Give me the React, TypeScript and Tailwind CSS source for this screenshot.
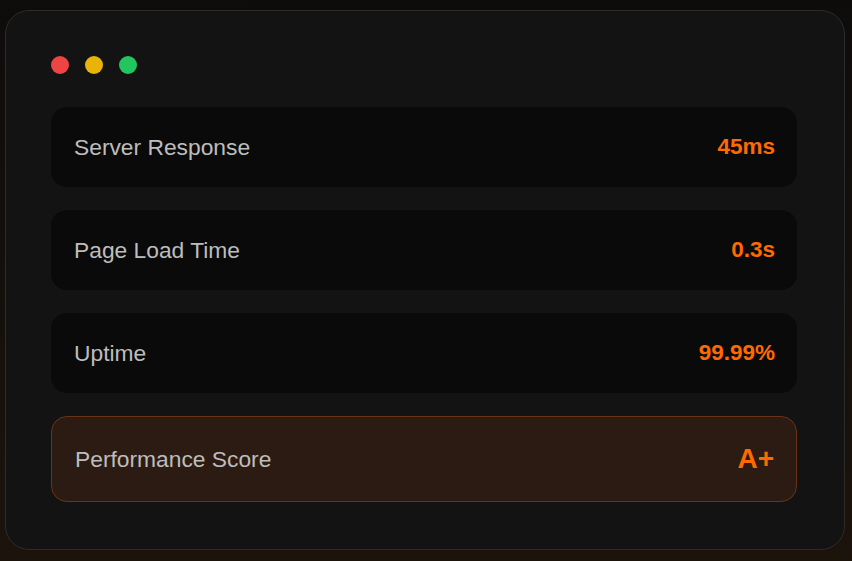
import React from "react";

interface Metric {
  label: string;
  value: string;
}

const metrics: Metric[] = [
  { label: "Server Response", value: "45ms" },
  { label: "Page Load Time", value: "0.3s" },
  { label: "Uptime", value: "99.99%" },
];

const font = { fontFamily: '"Liberation Sans", Arial, sans-serif' };

const MetricRow = ({ label, value }: Metric) => {
  return (
    <div className="flex h-[80px] items-center justify-between rounded-2xl bg-[#0a0a0a] pl-[23px] pr-[22px]">
      <span className="text-[22.8px] text-[#bdbdbd]">{label}</span>
      <span className="text-[22.5px] font-bold text-[#ff6a00]">{value}</span>
    </div>
  );
};

const App = () => {
  return (
    <div
      className="h-[561px] w-full overflow-hidden bg-gradient-to-b from-[#0e0c0b] to-[#1c130b] pt-[10px]"
      style={font}
    >
      <div className="ml-[5px] h-[540px] w-[840px] rounded-[24px] border border-[#2c2c2c] bg-[#131313] pb-[45px] pl-[45px] pr-[47px] pt-[45px]">
        <div className="mb-[33px] flex gap-4">
          <span className="h-[18px] w-[18px] rounded-full bg-[#ef4444]" />
          <span className="h-[18px] w-[18px] rounded-full bg-[#eab308]" />
          <span className="h-[18px] w-[18px] rounded-full bg-[#22c55e]" />
        </div>

        <div className="flex flex-col gap-[23px]">
          {metrics.map((m) => (
            <MetricRow key={m.label} label={m.label} value={m.value} />
          ))}
          <div className="flex h-[86px] items-center justify-between rounded-2xl border border-[#6a3414] bg-[#2c1b12] pl-[23px] pr-[22px]">
            <span className="text-[22.8px] text-[#bdbdbd]">Performance Score</span>
            <span className="text-[28px] font-bold text-[#ff6a00]">A+</span>
          </div>
        </div>
      </div>
    </div>
  );
};

export default App;
